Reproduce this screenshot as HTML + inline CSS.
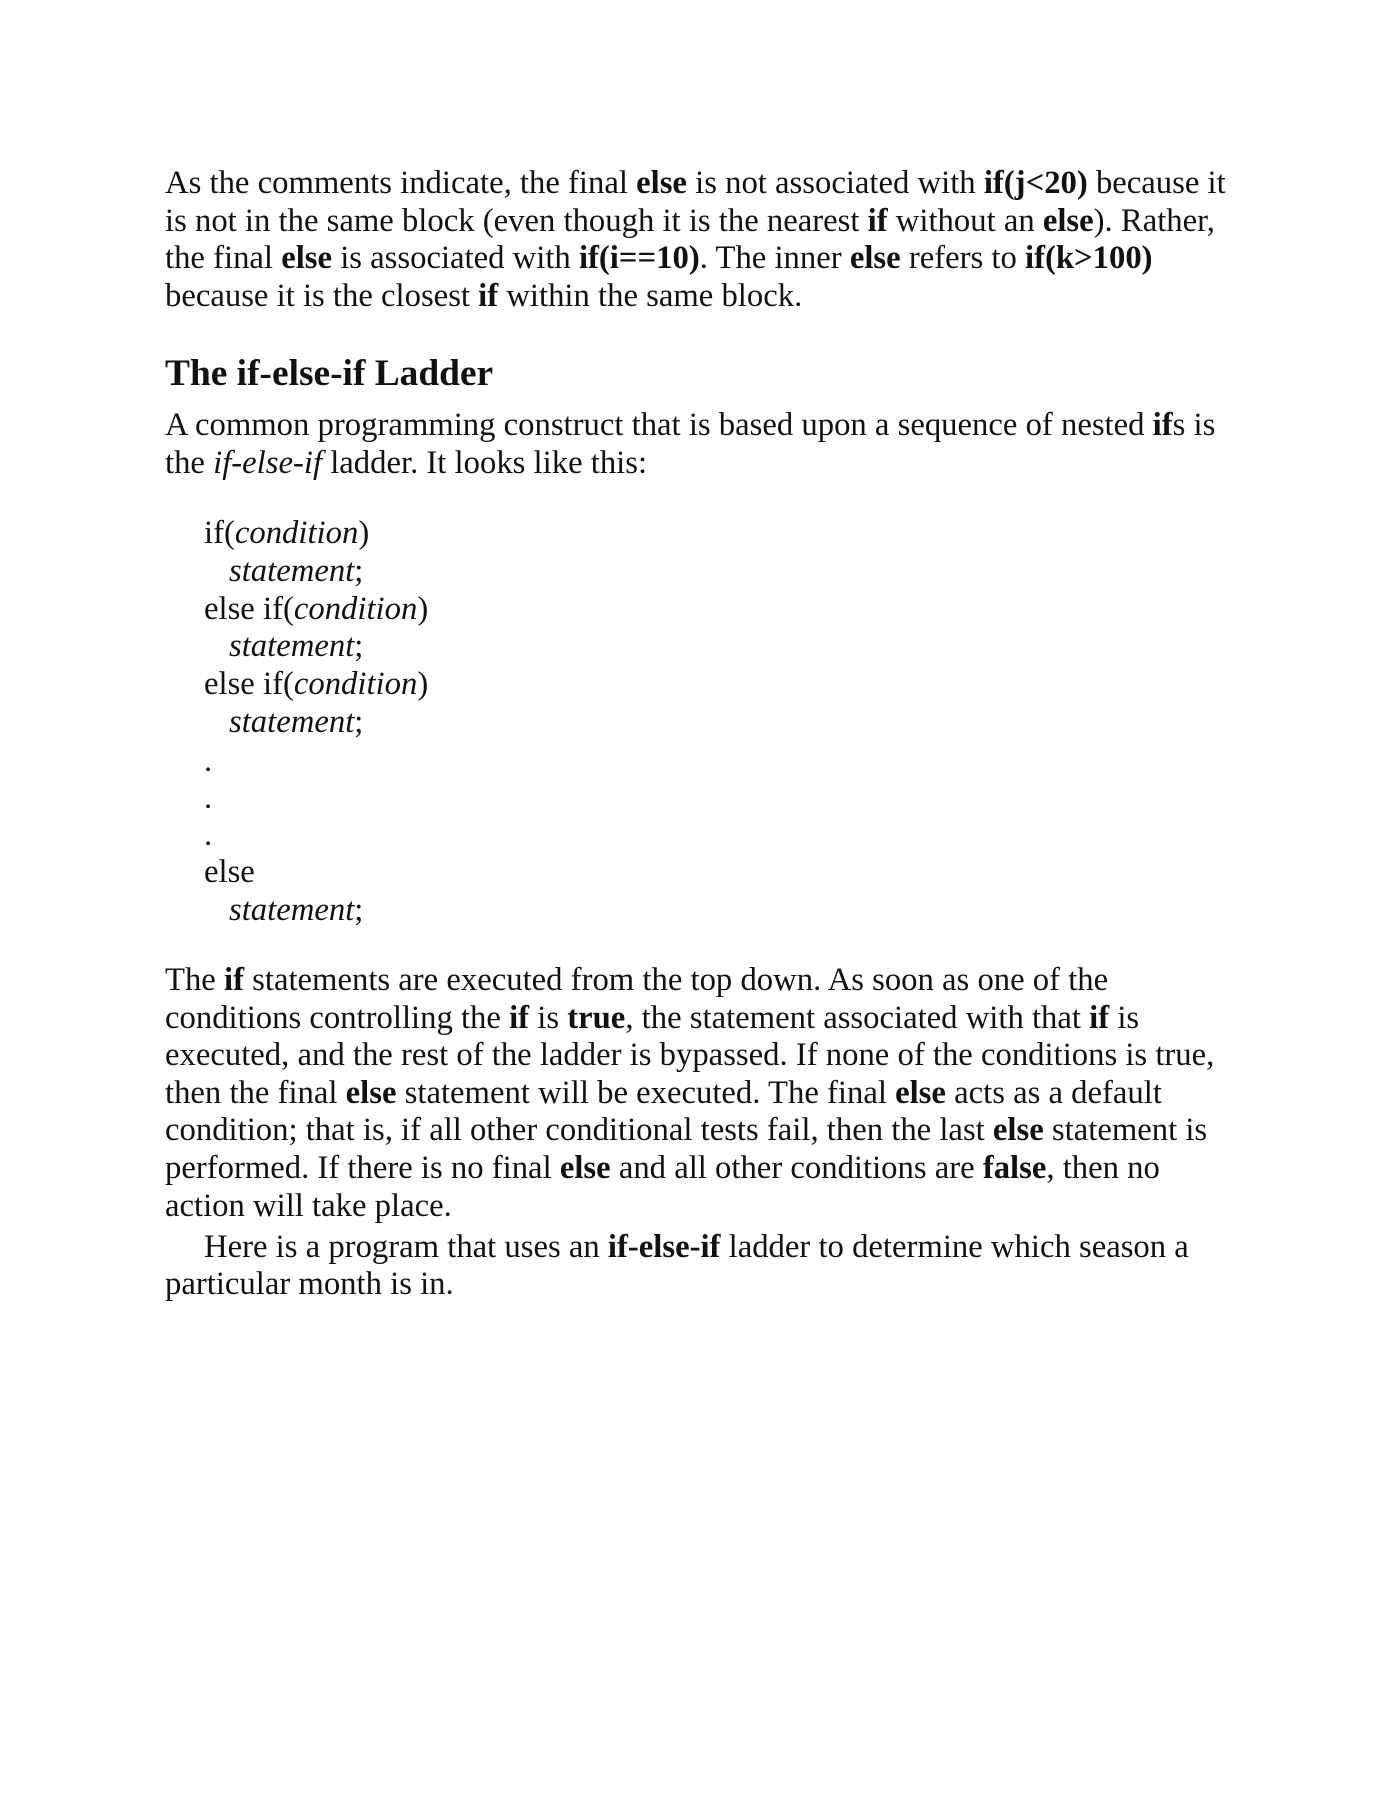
<!DOCTYPE html>
<html><head><meta charset="utf-8"><style>
body{margin:0;background:#fff;width:1390px;height:1800px;position:relative;font-family:"Liberation Serif",serif;color:#111;}
.l{position:absolute;left:165px;font-size:32.7px;line-height:38px;white-space:nowrap;}
.c{left:204px}.s{left:229px}
.h{font-size:37.4px;font-weight:bold}
</style></head><body>
<div class="l" style="top:164px">As the comments indicate, the final <b>else</b> is not associated with <b>if(j&lt;20)</b> because it</div>
<div class="l" style="top:202px">is not in the same block (even though it is the nearest <b>if</b> without an <b>else</b>). Rather,</div>
<div class="l" style="top:239px">the final <b>else</b> is associated with <b>if(i==10)</b>. The inner <b>else</b> refers to <b>if(k&gt;100)</b></div>
<div class="l" style="top:277px">because it is the closest <b>if</b> within the same block.</div>
<div class="l h" style="top:355px">The if-else-if Ladder</div>
<div class="l" style="top:406px">A common programming construct that is based upon a sequence of nested <b>if</b>s is</div>
<div class="l" style="top:444px">the <i>if-else-if</i> ladder. It looks like this:</div>
<div class="l c" style="top:514px">if(<i>condition</i>)</div>
<div class="l s" style="top:552px"><i>statement</i>;</div>
<div class="l c" style="top:590px">else if(<i>condition</i>)</div>
<div class="l s" style="top:627px"><i>statement</i>;</div>
<div class="l c" style="top:665px">else if(<i>condition</i>)</div>
<div class="l s" style="top:703px"><i>statement</i>;</div>
<div class="l c" style="top:742px">.</div>
<div class="l c" style="top:779px">.</div>
<div class="l c" style="top:816px">.</div>
<div class="l c" style="top:853px">else</div>
<div class="l s" style="top:891px"><i>statement</i>;</div>
<div class="l" style="top:961px">The <b>if</b> statements are executed from the top down. As soon as one of the</div>
<div class="l" style="top:999px">conditions controlling the <b>if</b> is <b>true</b>, the statement associated with that <b>if</b> is</div>
<div class="l" style="top:1036px">executed, and the rest of the ladder is bypassed. If none of the conditions is true,</div>
<div class="l" style="top:1074px">then the final <b>else</b> statement will be executed. The final <b>else</b> acts as a default</div>
<div class="l" style="top:1111px">condition; that is, if all other conditional tests fail, then the last <b>else</b> statement is</div>
<div class="l" style="top:1149px">performed. If there is no final <b>else</b> and all other conditions are <b>false</b>, then no</div>
<div class="l" style="top:1187px">action will take place.</div>
<div class="l c" style="top:1228px">Here is a program that uses an <b>if-else-if</b> ladder to determine which season a</div>
<div class="l" style="top:1265px">particular month is in.</div>
</body></html>
